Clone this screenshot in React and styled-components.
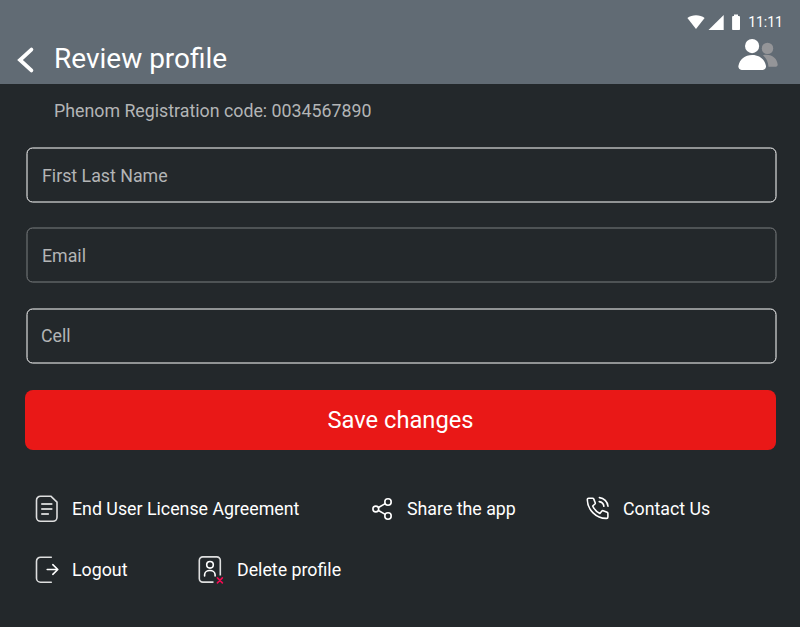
import React from "react";
import styled, { createGlobalStyle } from "styled-components";

const GlobalStyle = createGlobalStyle`
  *, *::before { box-sizing: border-box; }
  body {
    margin: 0;
    background: #23282b;
    font-family: Roboto, sans-serif;
  }
`;

const Screen = styled.div`
  width: 800px;
  height: 627px;
  overflow: hidden;
  display: flex;
  flex-direction: column;
  background: #23282b;
`;

const Header = styled.header`
  height: 84px;
  flex: none;
  display: flex;
  justify-content: space-between;
  background: #616b74;
  color: #fff;
`;

const TitleGroup = styled.div`
  display: flex;
  align-items: center;
  gap: 19px;
  margin-top: 34px;
  height: 50px;
  padding-left: 17px;
`;

const Title = styled.h1`
  margin: 0;
  font-size: 28px;
  line-height: 50px;
  font-weight: 400;
`;

const HeaderSide = styled.div`
  display: flex;
  flex-direction: column;
  align-items: flex-end;
  padding: 14px 17px 0 0;
`;

const StatusBar = styled.div`
  display: flex;
  align-items: center;
  height: 16px;
`;

const Clock = styled.time`
  margin-left: 7px;
  font-size: 14px;
  line-height: 16px;
`;

const Icon = styled.svg`
  display: block;
  flex: none;
  overflow: visible;
`;

const People = styled(Icon)`
  margin: 8px 5px 0 0;
`;

const Main = styled.main`
  display: flex;
  flex-direction: column;
  padding: 0 24px 0 25px;
`;

const Code = styled.p`
  margin: 15px 0 0 29px;
  font-size: 17.8px;
  line-height: 24px;
  color: #b3b5b6;
`;

const Form = styled.form`
  display: flex;
  flex-direction: column;
  margin-top: 24px;
`;

const Field = styled.label`
  position: relative;
  height: 55px;
  margin: 0 0 ${(p) => p.$gap}px 1px;
  padding-left: ${(p) => p.$inset}px;
  font-size: 17.8px;
  line-height: ${(p) => p.$leading}px;
  color: #b3b5b6;
  &::before {
    content: "";
    position: absolute;
    inset: 0;
    border: 1px solid ${(p) => (p.$muted ? "#7b7e80" : "#fff")};
    border-radius: 6px;
    transform: translate(0.5px, 0.5px);
  }
`;

const SaveButton = styled.button`
  height: 60px;
  border: 0;
  padding: 0;
  border-radius: 8px;
  background: #e91817;
  color: #fff;
  font: 400 23.7px/60px Roboto, sans-serif;
`;

const Links = styled.nav`
  display: flex;
  flex-direction: column;
  gap: 31px;
  margin: 44px 0 0 10px;
`;

const LinkRow = styled.div`
  display: grid;
  grid-template-columns: ${(p) => p.$columns};
`;

const Action = styled.a`
  display: flex;
  align-items: center;
  gap: 13px;
  height: 30px;
  color: #fff;
  font-size: 17.8px;
  line-height: 30px;
  white-space: nowrap;
`;

const line = { fill: "none", stroke: "#fff", strokeWidth: 1.6, strokeLinecap: "round", strokeLinejoin: "round" };

const BackIcon = () => (
  <Icon width="18" height="26" viewBox="0 0 18 26" fill="none" stroke="#fff" strokeWidth="3.8" strokeLinecap="round">
    <path d="M14.400 3.600 3 14l11.400 10.400" />
  </Icon>
);

const WifiIcon = () => (
  <Icon width="18" height="15" viewBox="0 0 18 15" fill="#fff">
    <path d="M.4 3.100C5-.6 13-.6 17.600 3.100L9 14Z" />
  </Icon>
);

const SignalIcon = () => (
  <Icon width="26" height="15" viewBox="0 0 26 15" fill="#fff">
    <path d="M3.500 15 18.700 0v15Z" />
  </Icon>
);

const BatteryIcon = () => (
  <Icon width="10" height="16" viewBox="0 0 10 16" fill="#fff">
    <path d="M3 .4h4v1.600h1.100c.5 0 .9.4.9.9v12.100c0 .6-.4 1-.9 1H2c-.5 0-.9-.4-.9-1V2.900c0-.5.4-.9.9-.9h1Z" />
  </Icon>
);

const PeopleIcon = () => (
  <People width="40" height="32" viewBox="0 0 40 32">
    <circle cx="29.500" cy="10.400" r="5.700" fill="#949598" />
    <path d="M25 17.200c9-1.700 14 3.500 14.700 9.300.1 1.200-.7 2.200-1.900 2.200h-7.300c-.3-5-2.400-8.900-5.500-11.500Z" fill="#949598" />
    <circle cx="14.100" cy="8.100" r="7.100" fill="#fff" />
    <path d="M14.200 17.100C6.800 17.100 1.800 21.300.4 28c-.3 1.300.8 3.900 3.300 3.900h21c2.500 0 3.600-2.600 3.300-3.900-1.400-6.700-6.400-10.900-13.800-10.900Z" fill="#fff" />
  </People>
);

const DocumentIcon = () => (
  <Icon width="24" height="30" viewBox="0 0 24 30" {...line}>
    <path d="M5.500 2.200h10.300L22 8.100v15.200a4 4 0 0 1-4 4H5.500a4 4 0 0 1-4-4V6.200a4 4 0 0 1 4-4Z" strokeOpacity=".85" />
    <path d="M6.800 10h10M6.800 15h10M6.800 20h6.500" />
  </Icon>
);

const LogoutIcon = () => (
  <Icon width="24" height="30" viewBox="0 0 24 30" {...line}>
    <path d="M16.300 2.200H5.500a4 4 0 0 0-4 4v17a4 4 0 0 0 4 4h10.800" strokeOpacity=".85" />
    <path d="M12.200 14.500H22.600M17.800 9.700l5 4.800-5 4.800" />
  </Icon>
);

const ShareIcon = () => (
  <Icon width="22" height="30" viewBox="0 0 22 30" {...line}>
    <circle cx="3.800" cy="15" r="2.900" />
    <circle cx="16" cy="8" r="3.200" />
    <circle cx="16" cy="22" r="3.200" />
    <path d="m6.500 13.500 6.700-3.900M6.500 16.500l6.700 3.900" />
  </Icon>
);

const PhoneIcon = () => (
  <Icon width="24" height="30" viewBox="0 0 24 30" {...line}>
    <path d="M2.600 4.200h4c.5 0 .9.300 1.100.7l1.500 3.800c.2.500.1.900-.3 1.300l-2.200 2c1.500 3.500 3.700 5.800 7.200 7.400l2-2.400c.4-.4.800-.5 1.300-.3l3.900 1.600c.5.2.8.6.8 1.100v3.500c0 .9-.5 1.500-1.400 1.500C10.300 24.600 1.300 15.700 1.300 5.500c0-.8.500-1.300 1.300-1.300Z" />
    <path d="M13.400 3.600a9.500 9.500 0 0 1 8.600 8.600M13.200 7.600c2.600.3 4.400 2.100 4.700 4.700" />
  </Icon>
);

const DeleteIcon = () => (
  <Icon width="26" height="30" viewBox="0 0 26 30" {...line}>
    <path d="M15.500 27.100H4.800a3.500 3.500 0 0 1-3.500-3.500V5.400a3.500 3.500 0 0 1 3.500-3.500h14a3.500 3.500 0 0 1 3.500 3.500v15" strokeOpacity=".85" strokeLinecap="butt" />
    <circle cx="12" cy="9.800" r="3.300" />
    <path d="M6.600 21v-1.200c0-5.700 10.500-5.700 10.500 0V21" />
    <path d="m19.400 22.900 5 5M24.400 22.900l-5 5" stroke="#f00b51" />
  </Icon>
);

export default function App() {
  return (
    <Screen>
      <GlobalStyle />
      <Header>
        <TitleGroup>
          <BackIcon />
          <Title>Review profile</Title>
        </TitleGroup>
        <HeaderSide>
          <StatusBar>
            <WifiIcon />
            <SignalIcon />
            <BatteryIcon />
            <Clock>11:11</Clock>
          </StatusBar>
          <PeopleIcon />
        </HeaderSide>
      </Header>
      <Main>
        <Code>Phenom Registration code: 0034567890</Code>
        <Form>
          <Field $gap={25} $inset={16} $leading={57}>First Last Name</Field>
          <Field $gap={26} $inset={16} $leading={57} $muted>Email</Field>
          <Field $gap={27} $inset={15} $leading={55}>Cell</Field>
          <SaveButton type="button">Save changes</SaveButton>
        </Form>
        <Links>
          <LinkRow $columns="337px 214px 1fr">
            <Action><DocumentIcon />End User License Agreement</Action>
            <Action><ShareIcon />Share the app</Action>
            <Action><PhoneIcon />Contact Us</Action>
          </LinkRow>
          <LinkRow $columns="163px 1fr">
            <Action><LogoutIcon />Logout</Action>
            <Action><DeleteIcon />Delete profile</Action>
          </LinkRow>
        </Links>
      </Main>
    </Screen>
  );
}
